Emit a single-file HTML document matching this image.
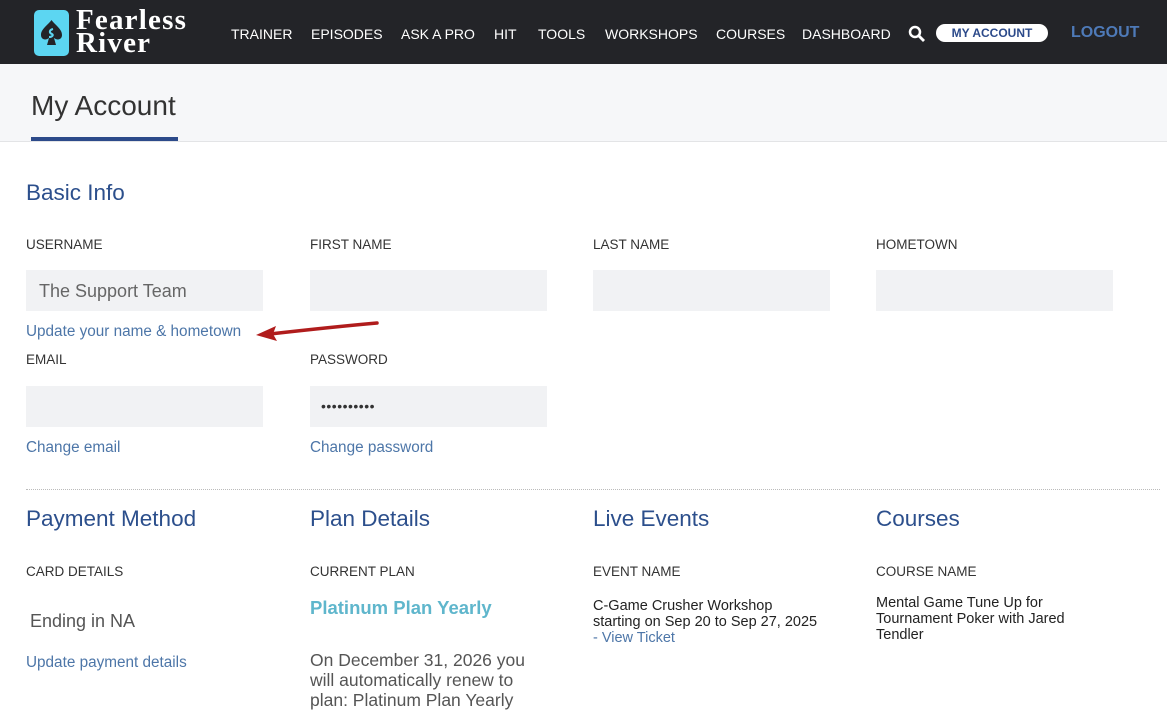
<!DOCTYPE html>
<html><head><style>
*{margin:0;padding:0;box-sizing:border-box}
body{width:1167px;height:720px;overflow:hidden;background:#fff;font-family:"Liberation Sans",sans-serif;position:relative}
.a{position:absolute;white-space:nowrap}
.hdr{position:absolute;left:0;top:0;width:1167px;height:64px;background:#232428}
.nav{color:#fff;font-size:14px;top:26px}
.sub{position:absolute;left:0;top:64px;width:1167px;height:78px;background:#f6f7f9;border-bottom:1px solid #e3e4e6}
.h2{color:#2c4f8c;font-size:22.5px}
.lbl{color:#333;font-size:13.5px}
.in{position:absolute;width:237px;height:41px;background:#f1f2f4}
.lnk{color:#4d76a8;font-size:15.3px}
</style></head><body>
<div class="hdr"></div>
<div class="a" style="left:34px;top:10px;width:35px;height:46px;background:#5cd6f2;border-radius:5px"></div>
<svg class="a" style="left:38px;top:18px" width="27" height="30" viewBox="0 0 27 30"><path d="M13.5 2 C9 8 3 11 3 17 C3 21 7 23 11 20 L9 27 H18 L16 20 C20 23 24 21 24 17 C24 11 18 8 13.5 2Z" fill="#232428"/><path d="M15 11 C11 12 11 15 14 16 C16 17 14 19 11 19" stroke="#5cd6f2" stroke-width="2" fill="none"/></svg>
<div class="a" style="left:76px;top:9px;color:#fff;font-family:'Liberation Serif',serif;font-size:29px;line-height:23px;font-weight:bold;letter-spacing:1.2px">Fearless<br>River</div>
<div class="a nav" style="left:231px">TRAINER</div>
<div class="a nav" style="left:311px">EPISODES</div>
<div class="a nav" style="left:401px">ASK A PRO</div>
<div class="a nav" style="left:494px">HIT</div>
<div class="a nav" style="left:538px">TOOLS</div>
<div class="a nav" style="left:605px">WORKSHOPS</div>
<div class="a nav" style="left:716px">COURSES</div>
<div class="a nav" style="left:802px">DASHBOARD</div>
<svg class="a" style="left:908px;top:25px" width="18" height="18" viewBox="0 0 18 18"><circle cx="7" cy="7" r="5" stroke="#fff" stroke-width="2.5" fill="none"/><path d="M11 11 L16 16" stroke="#fff" stroke-width="2.8"/></svg>
<div class="a" style="left:936px;top:24px;width:112px;height:18px;background:#fff;border-radius:9px;color:#2c4a8a;font-size:12px;font-weight:bold;text-align:center;line-height:18px">MY ACCOUNT</div>
<div class="a" style="left:1071px;top:24px;color:#4e7ab8;font-size:16px;font-weight:bold">LOGOUT</div>
<div class="sub"></div>
<div class="a" style="left:31px;top:90px;font-size:28px;color:#333">My Account</div>
<div class="a" style="left:31px;top:137px;width:147px;height:4px;background:#2c4a8a"></div>

<div class="a h2" style="left:26px;top:180px">Basic Info</div>
<div class="a lbl" style="left:26px;top:237px">USERNAME</div>
<div class="a lbl" style="left:310px;top:237px">FIRST NAME</div>
<div class="a lbl" style="left:593px;top:237px">LAST NAME</div>
<div class="a lbl" style="left:876px;top:237px">HOMETOWN</div>
<div class="in" style="left:26px;top:270px"></div>
<div class="in" style="left:310px;top:270px"></div>
<div class="in" style="left:593px;top:270px"></div>
<div class="in" style="left:876px;top:270px"></div>
<div class="a" style="left:39px;top:281px;font-size:18px;color:#666">The Support Team</div>
<div class="a lnk" style="left:26px;top:323px">Update your name &amp; hometown</div>
<svg class="a" style="left:252px;top:318px" width="130" height="26"><path d="M125 5 Q80 9 18 16" stroke="#b01c1c" stroke-width="3.5" fill="none" stroke-linecap="round"/><path d="M4 17 L24 8 L21 16 L25 23Z" fill="#b01c1c"/></svg>
<div class="a lbl" style="left:26px;top:352px">EMAIL</div>
<div class="a lbl" style="left:310px;top:352px">PASSWORD</div>
<div class="in" style="left:26px;top:386px"></div>
<div class="in" style="left:310px;top:386px"></div>
<div class="a" style="left:321px;top:398px;font-size:14px;color:#333;letter-spacing:0.5px">••••••••••</div>
<div class="a lnk" style="left:26px;top:439px">Change email</div>
<div class="a lnk" style="left:310px;top:439px">Change password</div>
<div class="a" style="left:26px;top:489px;width:1134px;border-top:1px dotted #bbb"></div>

<div class="a h2" style="left:26px;top:506px">Payment Method</div>
<div class="a h2" style="left:310px;top:506px">Plan Details</div>
<div class="a h2" style="left:593px;top:506px">Live Events</div>
<div class="a h2" style="left:876px;top:506px">Courses</div>
<div class="a lbl" style="left:26px;top:564px">CARD DETAILS</div>
<div class="a lbl" style="left:310px;top:564px">CURRENT PLAN</div>
<div class="a lbl" style="left:593px;top:564px">EVENT NAME</div>
<div class="a lbl" style="left:876px;top:564px">COURSE NAME</div>
<div class="a" style="left:30px;top:611px;font-size:18px;color:#555">Ending in NA</div>
<div class="a lnk" style="left:26px;top:654px">Update payment details</div>
<div class="a" style="left:310px;top:597px;font-size:18.5px;font-weight:bold;color:#5fb6cc">Platinum Plan Yearly</div>
<div class="a" style="left:310px;top:650px;font-size:17.5px;color:#555;line-height:20px">On December 31, 2026 you<br>will automatically renew to<br>plan: Platinum Plan Yearly</div>
<div class="a" style="left:593px;top:598px;font-size:14.5px;color:#222;line-height:16px">C-Game Crusher Workshop<br>starting on Sep 20 to Sep 27, 2025<br><span style="color:#4d76a8">- View Ticket</span></div>
<div class="a" style="left:876px;top:595px;font-size:14.5px;color:#222;line-height:16px">Mental Game Tune Up for<br>Tournament Poker with Jared<br>Tendler</div>
</body></html>
